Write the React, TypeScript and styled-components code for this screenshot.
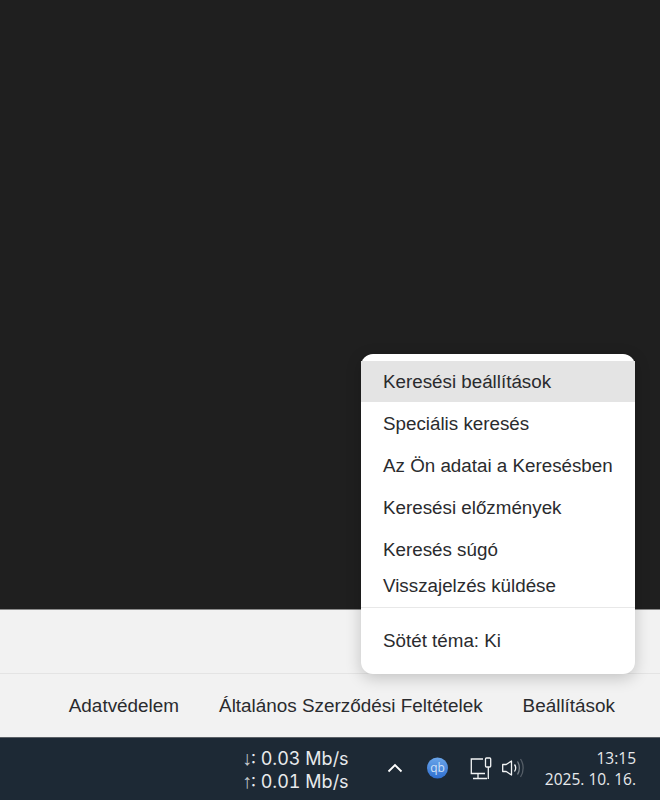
import React from "react";
import styled, { createGlobalStyle } from "styled-components";

const Global = createGlobalStyle`
  html, body { margin: 0; padding: 0; background: #1f1f1f; }
  body { font-family: "Liberation Sans", Arial, sans-serif; }
`;

const Page = styled.div`
  position: relative;
  width: 660px;
  height: 800px;
  display: flex;
  flex-direction: column;
  overflow: hidden;
`;
const Main = styled.main`
  flex: 1;
  background: #1f1f1f;
`;
const Footer = styled.footer`
  background: #f2f2f2;
  border-top: 1px solid #8a8a8a;
  display: flex;
  flex-direction: column;
  height: 128px;
  box-sizing: border-box;
`;
const FooterTop = styled.div`
  height: 63px;
  border-bottom: 1px solid #e4e4e4;
`;
const FooterLinks = styled.nav`
  flex: 1;
  display: flex;
  justify-content: flex-end;
  align-items: center;
  gap: 40px;
  padding-right: 45px;
`;
const FooterLink = styled.a`
  font-size: 18.9px;
  color: #2a2b2e;
  line-height: 20px;
`;
const Taskbar = styled.div`
  height: 63px;
  background: #1d2935;
  border-top: 1px solid #5b6167;
  box-sizing: border-box;
  display: flex;
  align-items: center;
  color: #e8eaec;
  font-family: "Inter", "Open Sans", sans-serif;
`;
const Speed = styled.div`
  margin-left: 242px;
  width: 107px;
  padding-top: 2px;
  font-size: 18px;
  line-height: 22px;
  white-space: nowrap;
  font-variant-numeric: tabular-nums;
`;
const SpeedRow = styled.div`
  display: flex;
  align-items: baseline;
`;
const Arrow = styled.span`
  width: 9px;
  font-family: "Liberation Sans", sans-serif;
  font-size: 20px;
  line-height: 22px;
  color: #c3c8cd;
`;
const SpeedValue = styled.span`
  white-space: pre;
`;
const Chevron = styled.svg`
  margin-left: 38px;
  margin-bottom: 2px;
  width: 16px;
  height: 10px;
`;
const Tray = styled.svg`
  margin-left: 24px;
  width: 101px;
  height: 30px;
`;
const Clock = styled.div`
  margin-left: auto;
  margin-right: 24px;
  text-align: right;
  font-family: "Open Sans", sans-serif;
  font-size: 15.5px;
  line-height: 21px;
`;
const Menu = styled.div`
  position: absolute;
  left: 361px;
  top: 354px;
  width: 274px;
  height: 320px;
  background: #fff;
  border-radius: 12px;
  box-shadow: 0 4px 16px rgba(0, 0, 0, 0.2);
  padding-top: 7px;
  box-sizing: border-box;
  color: #2a2b2e;
  font-size: 18.8px;
`;
const MenuItem = styled.div<{ $h: number; $active?: boolean }>`
  height: ${(p) => p.$h}px;
  display: flex;
  align-items: center;
  padding-left: 22px;
  background: ${(p) => (p.$active ? "#e4e4e4" : "transparent")};
`;
const MenuDivider = styled.div`
  height: 1px;
  background: #e8e8e8;
  margin-top: 5px;
`;

export default function App() {
  return (
    <Page>
      <Global />
      <Main />
      <Footer>
        <FooterTop />
        <FooterLinks>
          <FooterLink>Adatvédelem</FooterLink>
          <FooterLink>Általános Szerződési Feltételek</FooterLink>
          <FooterLink>Beállítások</FooterLink>
        </FooterLinks>
      </Footer>
      <Taskbar>
        <Speed>
          <SpeedRow>
            <Arrow>↓</Arrow>
            <SpeedValue>: 0.03 Mb/s</SpeedValue>
          </SpeedRow>
          <SpeedRow>
            <Arrow>↑</Arrow>
            <SpeedValue>: 0.01 Mb/s</SpeedValue>
          </SpeedRow>
        </Speed>
        <Chevron viewBox="0 0 16 10" fill="none" stroke="#fff" strokeWidth="1.8">
          <path d="M1.5 8.5 8 2l6.500 6.500" />
        </Chevron>
        <Tray viewBox="0 0 101 30" fill="none">
          <defs>
            <linearGradient id="qb" x1="0" y1="0" x2="0" y2="1">
              <stop offset="0" stopColor="#6aa5ea" />
              <stop offset="1" stopColor="#2f6fd0" />
            </linearGradient>
          </defs>
          <circle cx="10.500" cy="14" r="10.500" fill="url(#qb)" />
          <text x="10.500" y="18" textAnchor="middle" fontSize="12" fontFamily="Open Sans" fill="#cfe0f7">qb</text>
          <g stroke="#f2f4f5" strokeWidth="1.3">
            <path d="M56 5H44.300v14.500H58" />
            <path d="M51 19.500v4.500M46 24.500h14" />
            <rect x="58.500" y="4" width="5.200" height="9" rx="1" />
            <path d="M61.300 13v12" />
          </g>
          <g strokeWidth="1.3" strokeLinejoin="round">
            <path d="M75.700 10.500h3.500l5.300-3.500v14l-5.300-3.500h-3.500z" stroke="#f2f4f5" />
            <path d="M87.500 10.500c1.300 1.800 1.300 5 0 7" stroke="#f2f4f5" />
            <path d="M90.500 7.500c2.500 3.800 2.500 9.200 0 13" stroke="#7b838b" />
            <path d="M93.500 5c3.500 5 3.500 13 0 18" stroke="#555e67" />
          </g>
        </Tray>
        <Clock>
          <div>13:15</div>
          <div>2025. 10. 16.</div>
        </Clock>
      </Taskbar>
      <Menu>
        <MenuItem $h={41} $active>Keresési beállítások</MenuItem>
        <MenuItem $h={43}>Speciális keresés</MenuItem>
        <MenuItem $h={42}>Az Ön adatai a Keresésben</MenuItem>
        <MenuItem $h={42}>Keresési előzmények</MenuItem>
        <MenuItem $h={41}>Keresés súgó</MenuItem>
        <MenuItem $h={32}>Visszajelzés küldése</MenuItem>
        <MenuDivider />
        <MenuItem $h={66}>Sötét téma: Ki</MenuItem>
      </Menu>
    </Page>
  );
}
